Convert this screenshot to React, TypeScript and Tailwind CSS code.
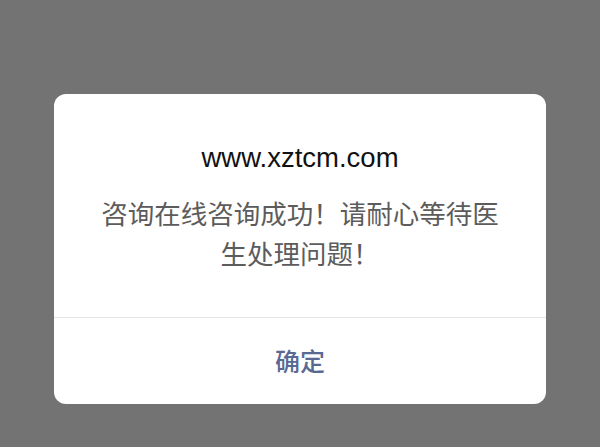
export default function App() {
  return (
    <div
      className="w-[600px] h-[447px] bg-[#737373] pt-[94px] px-[54px]"
      style={{ fontFamily: '"Liberation Sans", "Noto Sans CJK SC", sans-serif' }}
    >
      <div className="w-[492px] h-[310px] bg-white rounded-[12px] flex flex-col overflow-hidden">
        <div className="pt-[48px] px-[46px] pb-[44px] flex flex-col items-center">
          <div className="text-[27.5px] leading-[32px] text-[#111111]">www.xztcm.com</div>
          <div
            className="mt-[19px] text-[26.5px] leading-[40px] text-[#5c5c5c] text-center"
            style={{ fontFamily: '"Noto Sans CJK SC", sans-serif' }}
          >
            咨询在线咨询成功！请耐心等待医生处理问题！
          </div>
        </div>
        <div className="h-px bg-[#e6e6e6]" />
        <button
          className="flex-1 flex items-center justify-center text-[25px] font-medium text-[#586a94]"
          style={{ fontFamily: '"Noto Sans CJK SC", sans-serif' }}
        >
          确定
        </button>
      </div>
    </div>
  );
}
